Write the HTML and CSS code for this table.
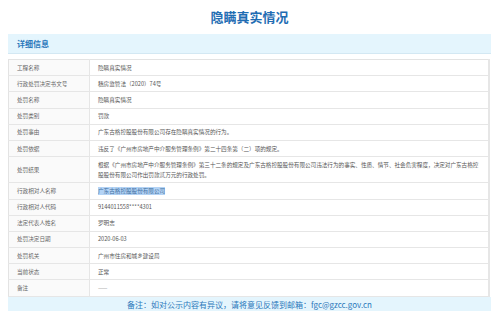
FILE: index.html
```html
<!DOCTYPE html>
<html lang="zh-CN">
<head>
<meta charset="utf-8">
<title>隐瞒真实情况</title>
<link rel="stylesheet" href="styles.css">
</head>
<body>
<div class="page">
  <h1 class="title">隐瞒真实情况</h1>
  <div class="panel-head">详细信息</div>
  <table class="info">
    <tr><td class="label">工程名称</td><td class="value">隐瞒真实情况</td></tr>
    <tr><td class="label">行政处罚决定书文号</td><td class="value">穗房监管法（2020）74号</td></tr>
    <tr><td class="label">处罚名称</td><td class="value">隐瞒真实情况</td></tr>
    <tr><td class="label">处罚类别</td><td class="value">罚款</td></tr>
    <tr><td class="label">处罚事由</td><td class="value">广东古格控股股份有限公司存在隐瞒真实情况的行为。</td></tr>
    <tr><td class="label">处罚依据</td><td class="value">违反了《广州市房地产中介服务管理条例》第二十四条第（二）项的规定。</td></tr>
    <tr><td class="label">处罚结果</td><td class="value">根据《广州市房地产中介服务管理条例》第三十二条的规定及广东古格控股股份有限公司违法行为的事实、性质、情节、社会危害程度，决定对广东古格控股股份有限公司作出罚款贰万元的行政处罚。</td></tr>
    <tr><td class="label">行政相对人名称</td><td class="value"><span class="selected">广东古格控股股份有限公司</span></td></tr>
    <tr><td class="label">行政相对人代码</td><td class="value">9144011558****4301</td></tr>
    <tr><td class="label">法定代表人姓名</td><td class="value">罗明志</td></tr>
    <tr><td class="label">处罚决定日期</td><td class="value">2020-06-03</td></tr>
    <tr><td class="label">处罚机关</td><td class="value">广州市住房和城乡建设局</td></tr>
    <tr><td class="label">当前状态</td><td class="value">正常</td></tr>
    <tr><td class="label">备注</td><td class="value">——</td></tr>
  </table>
  <div class="footer">备注：如对公示内容有异议，请将意见反馈到邮箱：fgc@gzcc.gov.cn</div>
</div>
</body>
</html>
```
FILE: styles.css
```css
html, body {
  margin: 0;
  padding: 0;
  background: #ffffff;
}
body {
  font-family: "Noto Sans CJK SC", "Noto Sans", sans-serif;
  color: #555555;
}
.page {
  padding: 0 9px 0 8px;
}
.title {
  margin: 0;
  height: 34px;
  line-height: 33px;
  text-align: center;
  font-size: 13px;
  font-weight: bold;
  color: #1f6db3;
}
.panel-head {
  height: 19px;
  line-height: 19px;
  background: #e4f5fd;
  border-bottom: 1px solid #d3e8f3;
  padding-left: 9px;
  font-size: 8px;
  font-weight: bold;
  color: #2b78bb;
  margin-bottom: 5px;
}
.info {
  width: 482px;
  border-collapse: collapse;
  border: 1px solid #e3e3e3;
  border-right: 2px solid #e6e6e6;
  font-size: 5.6px;
  line-height: 10px;
}
.info td {
  border-bottom: 1px solid #e6e6e6;
  padding: 2.6px 8px;
  line-height: 10px;
  vertical-align: middle;
}
.label {
  width: 64px;
  background: #fafafa;
  border-right: 1px solid #e6e6e6;
  color: #666666;
}
.value {
  color: #555555;
}
.selected {
  background: #b3d3f5;
  color: #3e6ea0;
}
.footer {
  height: 18px;
  line-height: 16px;
  background: #e4f5fd;
  text-align: center;
  font-size: 8px;
  color: #2b78bb;
}
```
